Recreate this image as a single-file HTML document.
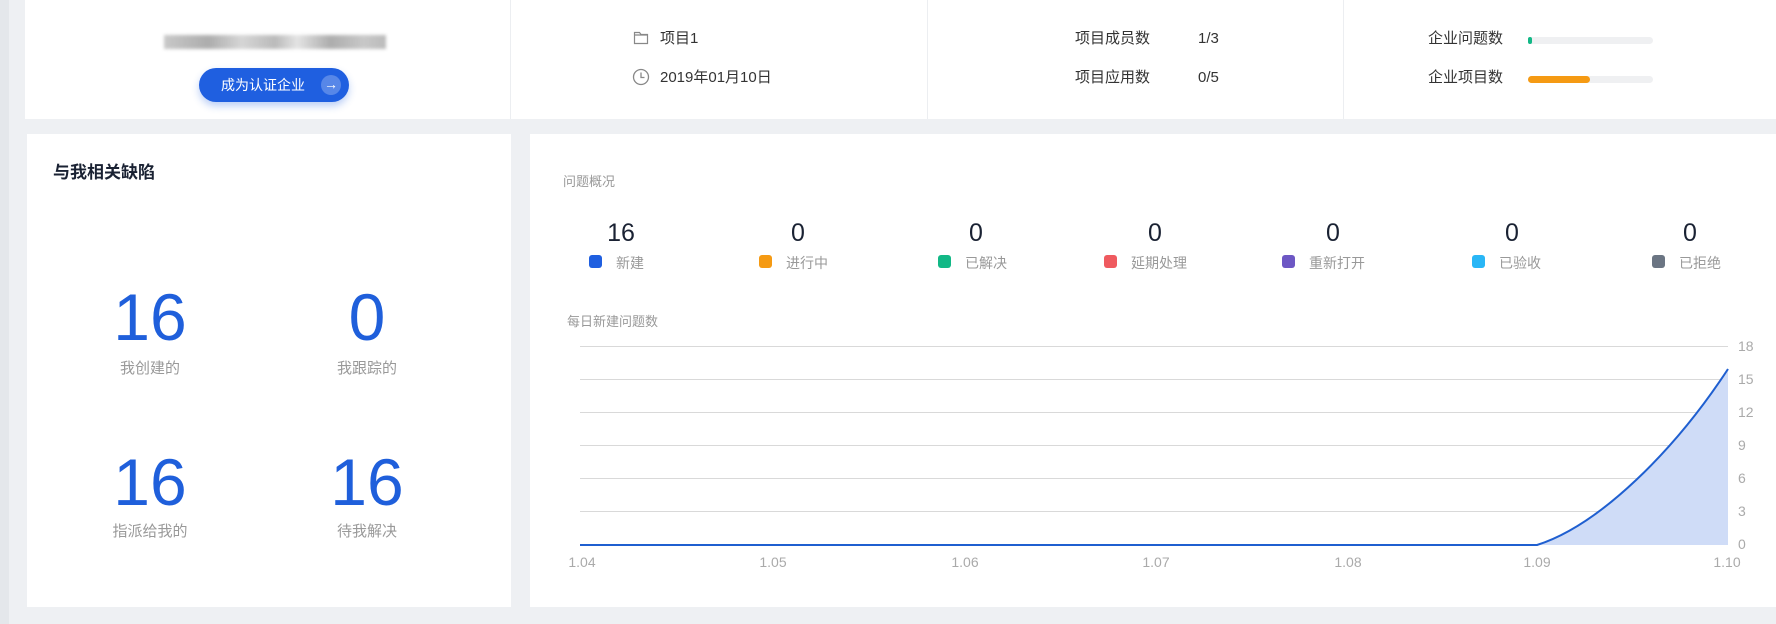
<!DOCTYPE html>
<html><head><meta charset="utf-8"><style>
*{margin:0;padding:0;box-sizing:border-box}
body{width:1776px;height:624px;background:#eef0f3;position:relative;overflow:hidden;font-family:"Liberation Sans","Noto Sans CJK SC",sans-serif;color:#333}
.a{position:absolute;white-space:nowrap}
.t{font-size:15px;line-height:22px;height:22px}
.card{position:absolute;background:#fff}
.c{transform:translateX(-50%)}
.big{font-size:66px;color:#1f5fdb;line-height:1}
.lbl{font-size:15px;color:#999}
.num{font-size:25px;color:#1a2233;line-height:1}
.sq{position:absolute;width:13px;height:13px;border-radius:3px}
.lg{font-size:14px;color:#999}
</style></head><body>
<div class="a" style="left:0;top:0;width:9px;height:624px;background:#e4e7eb"></div>
<div class="card" style="left:25px;top:0;width:1751px;height:119px"></div>
<div class="a" style="left:510px;top:0;width:1px;height:119px;background:#eceef1"></div>
<div class="a" style="left:927px;top:0;width:1px;height:119px;background:#eceef1"></div>
<div class="a" style="left:1343px;top:0;width:1px;height:119px;background:#eceef1"></div>
<div class="a" style="left:164px;top:35px;width:222px;height:14px;background:linear-gradient(90deg,#bbb,#999 20%,#ccc 35%,#aaa 50%,#ddd 60%,#999 75%,#bbb 90%,#aaa);opacity:.8;filter:blur(1.5px)"></div>
<div class="a" style="left:199px;top:68px;width:150px;height:34px;border-radius:17px;background:#1f5fe0;box-shadow:0 4px 8px rgba(31,95,224,.3);color:#fff;font-size:14px;line-height:34px;padding-left:22px">成为认证企业
<span style="position:absolute;right:8px;top:7px;width:20px;height:20px;border-radius:10px;background:rgba(255,255,255,.25);text-align:center;line-height:19px;font-size:14px;font-weight:bold">→</span></div>
<svg class="a" style="left:633px;top:30px" width="16" height="16" viewBox="0 0 16 16"><path d="M1.5 2.5h5l1.5 2h6.5v9h-13z M1.5 5h13" fill="none" stroke="#888" stroke-width="1.2"/></svg>
<div class="a t" style="left:660px;top:28px">项目1</div>
<svg class="a" style="left:632px;top:68px" width="18" height="18" viewBox="0 0 18 18"><circle cx="9" cy="9" r="7.5" fill="none" stroke="#888" stroke-width="1.3"/><path d="M9 4.5v5h3.5" fill="none" stroke="#888" stroke-width="1.3"/></svg>
<div class="a t" style="left:660px;top:67px">2019年01月10日</div>
<div class="a t" style="left:1075px;top:28px">项目成员数</div>
<div class="a t" style="left:1198px;top:28px">1/3</div>
<div class="a t" style="left:1075px;top:67px">项目应用数</div>
<div class="a t" style="left:1198px;top:67px">0/5</div>
<div class="a t" style="left:1428px;top:28px">企业问题数</div>
<div class="a" style="left:1528px;top:37px;width:125px;height:7px;border-radius:4px;background:#eff0f2"><div style="width:4px;height:7px;border-radius:3px;background:#12b886"></div></div>
<div class="a t" style="left:1428px;top:67px">企业项目数</div>
<div class="a" style="left:1528px;top:76px;width:125px;height:7px;border-radius:4px;background:#eff0f2"><div style="width:62px;height:7px;border-radius:4px;background:#f59a13"></div></div>

<div class="card" style="left:27px;top:134px;width:484px;height:473px"></div>
<div class="a" style="left:53px;top:158px;font-size:17px;font-weight:bold;color:#1a2233">与我相关缺陷</div>
<div class="a big c" style="left:150px;top:284px">16</div>
<div class="a lbl c" style="left:150px;top:357px">我创建的</div>
<div class="a big c" style="left:367px;top:284px">0</div>
<div class="a lbl c" style="left:367px;top:357px">我跟踪的</div>
<div class="a big c" style="left:150px;top:449px">16</div>
<div class="a lbl c" style="left:150px;top:520px">指派给我的</div>
<div class="a big c" style="left:367px;top:449px">16</div>
<div class="a lbl c" style="left:367px;top:520px">待我解决</div>

<div class="card" style="left:530px;top:134px;width:1246px;height:473px"></div>
<div class="a" style="left:563px;top:171px;font-size:13px;color:#999">问题概况</div>
<div class="a num c" style="left:621px;top:221px">16</div>
<div class="a num c" style="left:798px;top:221px">0</div>
<div class="a num c" style="left:976px;top:221px">0</div>
<div class="a num c" style="left:1155px;top:221px">0</div>
<div class="a num c" style="left:1333px;top:221px">0</div>
<div class="a num c" style="left:1512px;top:221px">0</div>
<div class="a num c" style="left:1690px;top:221px">0</div>
<div class="sq" style="left:589px;top:255px;background:#1f5fe0"></div><div class="a lg" style="left:616px;top:253px">新建</div>
<div class="sq" style="left:759px;top:255px;background:#f59a13"></div><div class="a lg" style="left:786px;top:253px">进行中</div>
<div class="sq" style="left:938px;top:255px;background:#12b886"></div><div class="a lg" style="left:965px;top:253px">已解决</div>
<div class="sq" style="left:1104px;top:255px;background:#ef5a5f"></div><div class="a lg" style="left:1131px;top:253px">延期处理</div>
<div class="sq" style="left:1282px;top:255px;background:#6d57c4"></div><div class="a lg" style="left:1309px;top:253px">重新打开</div>
<div class="sq" style="left:1472px;top:255px;background:#29b6f6"></div><div class="a lg" style="left:1499px;top:253px">已验收</div>
<div class="sq" style="left:1652px;top:255px;background:#6b7583"></div><div class="a lg" style="left:1679px;top:253px">已拒绝</div>
<div class="a" style="left:567px;top:311px;font-size:13px;color:#999">每日新建问题数</div>
<svg class="a" style="left:0;top:0" width="1776" height="624">
<g stroke="#d9d9d9" stroke-width="1">
<line x1="580" y1="346.5" x2="1728" y2="346.5"/><line x1="580" y1="379.5" x2="1728" y2="379.5"/><line x1="580" y1="412.5" x2="1728" y2="412.5"/><line x1="580" y1="445.5" x2="1728" y2="445.5"/><line x1="580" y1="478.5" x2="1728" y2="478.5"/><line x1="580" y1="511.5" x2="1728" y2="511.5"/>
</g>
<path d="M1537 545 C1600 525 1675 450 1728 369 L1728 545 Z" fill="#cfdcf7"/>
<path d="M580 545 L1537 545 C1600 525 1675 450 1728 369" fill="none" stroke="#1f5fd0" stroke-width="2"/>
<g font-family="Liberation Sans" font-size="14" fill="#aaa">
<text x="1738" y="351">18</text><text x="1738" y="384">15</text><text x="1738" y="417">12</text><text x="1738" y="450">9</text><text x="1738" y="483">6</text><text x="1738" y="516">3</text><text x="1738" y="549">0</text>
<g text-anchor="middle"><text x="582" y="567">1.04</text><text x="773" y="567">1.05</text><text x="965" y="567">1.06</text><text x="1156" y="567">1.07</text><text x="1348" y="567">1.08</text><text x="1537" y="567">1.09</text><text x="1727" y="567">1.10</text></g>
</g>
</svg>
</body></html>
